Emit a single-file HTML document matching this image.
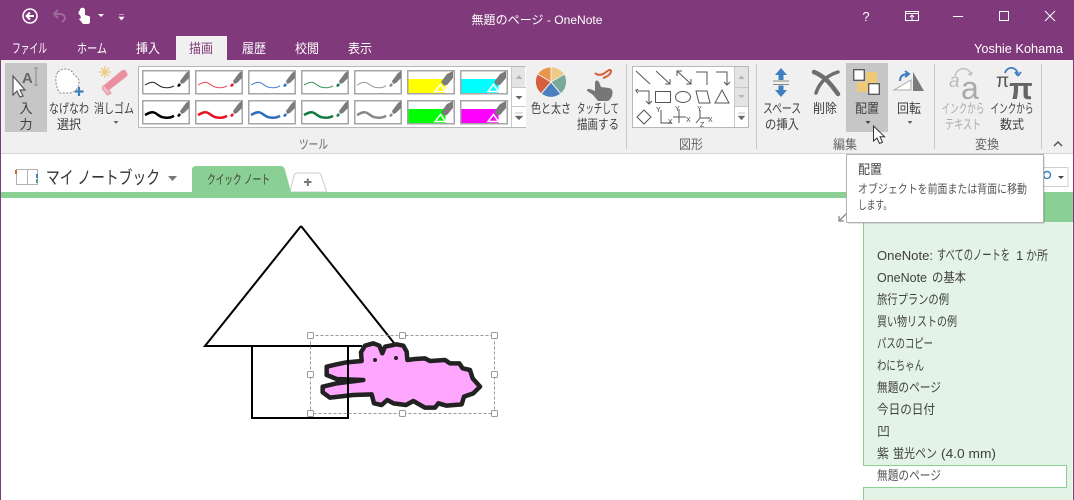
<!DOCTYPE html>
<html lang="ja"><head><meta charset="utf-8"><title>OneNote</title>
<style>
html,body{margin:0;padding:0;background:#fff;width:1074px;height:500px;overflow:hidden}
svg{display:block;position:absolute;left:0;top:0}
text{font-family:"Liberation Sans","Noto Sans CJK JP",sans-serif;font-size:13px;fill:#3f3f3f}
.w{fill:#fff}
.c{text-anchor:middle}
.g{fill:#666}
.d{fill:#aaa}
</style></head><body>
<svg width="1074" height="500" viewBox="0 0 1074 500" xmlns="http://www.w3.org/2000/svg">
<defs>
<g id="nib"><path d="M38 11l6-8 3-2v7l-5 5-3 1z" fill="#7b7b7b"/><path d="M35 16l2-3 2 2-2 2z" fill="currentColor"/></g>
<g id="cell"><rect x=".75" y=".75" width="46.5" height="23" fill="#fff" stroke="#a6a6a6" stroke-width="1.5"/></g>
<path id="wave" d="M3 15c3-1.500 6-3.500 9-2.500s5 4 9 4.800 8 .5 11-1.500" fill="none"/>
<g id="hl"><rect x=".75" y=".75" width="46.500" height="23" fill="#fff" stroke="#a6a6a6" stroke-width="1.500"/><rect x="1.500" y="9" width="37" height="14" fill="currentColor"/><path d="M28 21.500l5.500-7 5 7z" fill="currentColor" stroke="#fff" stroke-width="1.500"/><path d="M34 12l6-8 6-3v7l-6 7-3 .5z" fill="#7b7b7b"/></g>
</defs>

<!-- chrome -->
<rect width="1074" height="60" fill="#80397b"/>
<rect y="60" width="1074" height="93" fill="#f0f0f0"/>
<rect y="153" width="1074" height="1" fill="#d6d6d6"/>
<rect x="176" y="36" width="51" height="24" fill="#f0f0f0"/>
<rect x="0" y="60" width="1" height="440" fill="#80397b"/>
<rect x="1073" y="60" width="1" height="440" fill="#80397b"/>

<!-- quick access -->
<circle cx="30" cy="16" r="7" fill="none" stroke="#fff" stroke-width="1.500"/>
<path d="M34 16h-7M30 12.500L26.500 16l3.500 3.500" fill="none" stroke="#fff" stroke-width="2"/>
<path d="M58 10l-4 4 4 4M54 14h6c4 0 5 3 5 4s-1 3-3 4" fill="none" stroke="#9d6a9a" stroke-width="2"/>
<path d="M80 10c0-3 5-3 5 0v5l4 1c1 .5 1 1 1 2v4c0 1-1 2-2 2h-5l-4-5 2-1-1-3c-2-.5-2-3 0-5z" fill="#fff"/>
<path d="M98 14h6l-3 3z" fill="#fff"/>
<path d="M119 14.500h5M119 17h5l-2.500 3z" fill="#fff" stroke="#fff" stroke-width=".6"/>

<text class="w c" x="537" y="24" textLength="131" lengthAdjust="spacingAndGlyphs" style="font-size:12px">無題のページ - OneNote</text>

<!-- window controls -->
<text class="w c" x="866" y="21" style="font-size:13px">?</text>
<path d="M905.500 11.500h13v9h-13zM905.500 13.500h13M912 20v-5M910 17l2-2 2 2" fill="none" stroke="#fff"/>
<rect x="953" y="16" width="10" height="1" fill="#fff"/>
<rect x="999.500" y="11.500" width="9" height="9" fill="none" stroke="#fff"/>
<path d="M1045 11l10 10M1055 11l-10 10" stroke="#fff" fill="none"/>

<!-- tabs -->
<text class="w" x="12" y="53" textLength="35" lengthAdjust="spacingAndGlyphs">ファイル</text>
<text class="w" x="77" y="53" textLength="30" lengthAdjust="spacingAndGlyphs">ホーム</text>
<text class="w" x="136" y="53" textLength="24" lengthAdjust="spacingAndGlyphs">挿入</text>
<text x="189" y="53" textLength="24" lengthAdjust="spacingAndGlyphs" style="fill:#80397b">描画</text>
<text class="w" x="242" y="53" textLength="24" lengthAdjust="spacingAndGlyphs">履歴</text>
<text class="w" x="295" y="53" textLength="24" lengthAdjust="spacingAndGlyphs">校閲</text>
<text class="w" x="348" y="53" textLength="24" lengthAdjust="spacingAndGlyphs">表示</text>
<text class="w" x="974" y="53" textLength="89" lengthAdjust="spacingAndGlyphs">Yoshie Kohama</text>

<!-- input button -->
<rect x="5" y="63" width="42" height="69" fill="#c6c6c6"/>
<path d="M13 76v19l4-4 3 6 3-1-3-6h5z" fill="#fff" stroke="#555" stroke-width="1.200"/>
<text x="22" y="83" style="font-size:15px;font-weight:bold;fill:#666">A</text>
<path d="M34 68h4M36 68v17M34 85h4" stroke="#888" fill="none"/>
<text class="c" x="26" y="113">入</text>
<text class="c" x="26" y="129">力</text>

<!-- lasso -->
<path d="M58 72c5-5 13-3 15 1 1 3 6 4 6 9 0 6-4 11-10 11h-9c-4-5-6-16-2-21z" fill="#fff" stroke="#888" stroke-dasharray="2 1.500"/>
<path d="M79 87v9M75 91.500h8.500" stroke="#3f7fbf" stroke-width="2.200"/>
<text class="c" x="69" y="113" textLength="40" lengthAdjust="spacingAndGlyphs">なげなわ</text>
<text class="c" x="69" y="129" textLength="24" lengthAdjust="spacingAndGlyphs">選択</text>

<!-- eraser -->
<path d="M105 66v12M99 72h12M101 68l8 8M109 68l-8 8" stroke="#efc87f" stroke-width="1.300"/>
<path d="M103 86l18-15c2-1.500 4-1.500 5 0l1 2c1 1.500.5 3-1 4l-18 14z" fill="#e98fa0"/>
<path d="M103 86l-.5 3 5 6 3-1.500 .5-.5-6-7z" fill="#f1bcc6" stroke="#e98fa0"/>
<text class="c" x="114" y="113" textLength="40" lengthAdjust="spacingAndGlyphs">消しゴム</text>
<path d="M113.500 121h5l-2.500 3z" fill="#666"/>

<!-- pen gallery -->
<rect x="138.500" y="66.500" width="387" height="61" fill="#fff" stroke="#b8b8b8"/>
<g transform="translate(142,70)" color="#000"><use href="#cell"/><use href="#wave" stroke="#222"/><use href="#nib"/></g>
<g transform="translate(195,70)" color="#e81123"><use href="#cell"/><use href="#wave" stroke="#ef4b58"/><use href="#nib"/></g>
<g transform="translate(248,70)" color="#2e6dc0"><use href="#cell"/><use href="#wave" stroke="#4a82cc"/><use href="#nib"/></g>
<g transform="translate(301,70)" color="#107c41"><use href="#cell"/><use href="#wave" stroke="#3d9a5f"/><use href="#nib"/></g>
<g transform="translate(354,70)" color="#888"><use href="#cell"/><use href="#wave" stroke="#999"/><use href="#nib"/></g>
<g transform="translate(407,70)" color="#ff0"><use href="#hl"/></g>
<g transform="translate(460,70)" color="#0ff"><use href="#hl"/></g>
<g transform="translate(142,100)" color="#000"><use href="#cell"/><use href="#wave" stroke="#000" stroke-width="2.500"/><use href="#nib"/></g>
<g transform="translate(195,100)" color="#e81123"><use href="#cell"/><use href="#wave" stroke="#e81123" stroke-width="2.500"/><use href="#nib"/></g>
<g transform="translate(248,100)" color="#2e6dc0"><use href="#cell"/><use href="#wave" stroke="#2e6dc0" stroke-width="2.500"/><use href="#nib"/></g>
<g transform="translate(301,100)" color="#107c41"><use href="#cell"/><use href="#wave" stroke="#107c41" stroke-width="2.500"/><use href="#nib"/></g>
<g transform="translate(354,100)" color="#888"><use href="#cell"/><use href="#wave" stroke="#888" stroke-width="2.500"/><use href="#nib"/></g>
<g transform="translate(407,100)" color="#0f0"><use href="#hl"/></g>
<g transform="translate(460,100)" color="#f0f"><use href="#hl"/></g>
<!-- scroller -->
<rect x="512" y="67" width="14" height="60" fill="#fff"/>
<rect x="512" y="67" width="13" height="20" fill="#e4e4e4"/>
<path d="M515.500 79l3.500-4 3.500 4z" fill="#b5b5b5"/>
<path d="M512 87.500h14M512 106.500h14M511.500 67v60" stroke="#c8c8c8" fill="none"/>
<path d="M515.500 96h7l-3.500 3.500z" fill="#666"/>
<path d="M515 113h8M515 116h8l-4 4z" fill="#666" stroke="#888" stroke-width=".5"/>

<!-- color wheel -->
<g transform="translate(551,82)">
<path d="M0 0L-13 -8A15 15 0 0 1 0 -14.500z" fill="#e8964c"/>
<path d="M0 0L0 -14.500A15 15 0 0 1 13 -8z" fill="#efc986"/>
<path d="M0 0L13 -8A15 15 0 0 1 10 11z" fill="#7aa998"/>
<path d="M0 0L10 11A15 15 0 0 1 -10 11z" fill="#4a80bd"/>
<path d="M0 0L-10 11A15 15 0 0 1 -13 -8z" fill="#d4603f"/>
<path d="M0 0L0 -15M0 0L-13.500 -8M0 0L13.500 -8M0 0L10 12M0 0L-10 12" stroke="#f0f0f0"/>
</g>
<text class="c" x="551" y="113" textLength="40" lengthAdjust="spacingAndGlyphs">色と太さ</text>
<!-- touch draw -->
<path d="M595 73c3 3 8 2 11-1 3-2 4-3 5-1 0 3-4 6-8 7" fill="none" stroke="#d4603f" stroke-width="2"/>
<path d="M595 82c1-2 3-2 4 0l2 5 8 1c4 1 4 4 3 8-1 2-2 4-4 5h-10l-5-6c-2-2-7-4-6-5 1-2 3-1 8 1z" fill="#777"/>
<text class="c" x="598" y="113" textLength="42" lengthAdjust="spacingAndGlyphs">タッチして</text>
<text class="c" x="598" y="129" textLength="42" lengthAdjust="spacingAndGlyphs">描画する</text>

<rect x="626" y="64" width="1" height="85" fill="#c8c8c8"/>

<!-- shapes gallery -->
<rect x="632.500" y="66.500" width="116" height="61" fill="#fff" stroke="#b8b8b8"/>
<g fill="none" stroke="#555">
<path d="M636 71l14 13"/>
<path d="M656 71l14 13M670 79v5h-5"/>
<path d="M677 71l14 13M677 76v-5h5M691 79v5h-5"/>
<path d="M696 72h11v13"/>
<path d="M716 72h11v13M724 82l3 3 3-3"/>
<path d="M636 91v-1h2M638 91h11v13M636 91l2-2M636 91l2 2M646 101l3 3 3-3"/>
<rect x="655.500" y="91.500" width="15" height="11"/>
<ellipse cx="683" cy="97" rx="7.500" ry="5.500"/>
<path d="M696 91h11l3 12h-11z"/>
<path d="M722 90l7 13h-14z"/>
<path d="M644 110l7 7-7 7-7-7z"/>
<path d="M661 110v13h11"/>
<path d="M679 109v14M673 117h13"/>
<path d="M700 110v8h9M700 118l-4 5"/>
</g>
<g>
<text x="656" y="112" style="font-size:7px">Y</text><text x="668" y="124" style="font-size:7px">X</text>
<text x="675" y="111" style="font-size:7px">Y</text><text x="686" y="122" style="font-size:7px">X</text>
<text x="697" y="111" style="font-size:7px">Y</text><text x="708" y="122" style="font-size:7px">X</text><text x="700" y="127" style="font-size:7px">Z</text>
</g>
<rect x="735" y="67" width="13" height="20" fill="#e4e4e4"/>
<rect x="735" y="87" width="13" height="19" fill="#e4e4e4"/>
<path d="M738 79l3.500-3.500 3.500 3.500z" fill="#b5b5b5"/>
<path d="M738 95h7l-3.500 3z" fill="#b5b5b5"/>
<path d="M735 87.500h13M735 106.500h13M734.500 67v60" stroke="#c8c8c8" fill="none"/>
<path d="M738 113h7M738 116h7l-3.500 4z" fill="#666" stroke="#888" stroke-width=".5"/>

<rect x="756" y="64" width="1" height="85" fill="#c8c8c8"/>

<!-- space -->
<path d="M781 68l6 7h-3.500v5h-5v-5H775z" fill="#3f7fbf"/>
<path d="M773 81h16M773 84.500h16" stroke="#888" fill="none"/>
<path d="M781 97l6-7h-3.500v-4.500h-5V90H775z" fill="#3f7fbf"/>
<text class="c" x="782" y="113" textLength="38" lengthAdjust="spacingAndGlyphs">スペース</text>
<text class="c" x="782" y="129" textLength="34" lengthAdjust="spacingAndGlyphs">の挿入</text>
<!-- delete -->
<path d="M814 72c8 3 14 9 18 14l6 8" fill="none" stroke="#6e6e6e" stroke-width="4.500" stroke-linecap="round"/>
<path d="M838 72c-10 3-18 9-22 21" fill="none" stroke="#6e6e6e" stroke-width="3.500" stroke-linecap="round"/>
<text class="c" x="825" y="113" textLength="24" lengthAdjust="spacingAndGlyphs">削除</text>

<!-- arrange -->
<rect x="846" y="63" width="42" height="69" fill="#c6c6c6"/>
<rect x="866" y="72" width="11" height="11" fill="#efc878"/>
<rect x="857" y="82" width="11" height="10" fill="#efc878"/>
<rect x="853.700" y="69.700" width="10.600" height="10.600" fill="#fff" stroke="#555" stroke-width="1.300"/>
<rect x="868.700" y="83.700" width="10.600" height="10.600" fill="#fff" stroke="#555" stroke-width="1.300"/>
<text class="c" x="867" y="113" textLength="24" lengthAdjust="spacingAndGlyphs">配置</text>
<path d="M865.500 121h5l-2.500 3z" fill="#444"/>

<!-- rotate -->
<path d="M894 90l17-10v10z" fill="#fff" stroke="#aaa"/>
<path d="M913 72l11 19h-11z" fill="#7b7b7b"/>
<path d="M900 81c0-5 3-7 8-7M905 71l4 3-4 3" fill="none" stroke="#3f7fbf" stroke-width="2"/>
<text class="c" x="909" y="113" textLength="24" lengthAdjust="spacingAndGlyphs">回転</text>
<path d="M907.500 121h5l-2.500 3z" fill="#666"/>

<rect x="934" y="64" width="1" height="85" fill="#c8c8c8"/>

<!-- ink to text -->
<path d="M955 76c2-9 13-10 16-2M971 75l-3-1M971 75l1-3" fill="none" stroke="#bbb" stroke-width="1.300"/>
<text x="949" y="87" style="font-size:19px;font-style:italic;fill:#bbb">a</text>
<text x="961" y="99" style="font-size:32px;fill:#aaa">a</text>
<text class="c d" x="963" y="113" textLength="43" lengthAdjust="spacingAndGlyphs">インクから</text>
<text class="c d" x="963" y="129" textLength="36" lengthAdjust="spacingAndGlyphs">テキスト</text>
<!-- ink to math -->
<path d="M1005 73c2-7 11-7 13 1M1018 76l-3-4M1018 76l3-4" fill="none" stroke="#3f7fbf" stroke-width="1.800"/>
<text x="996" y="87" style="font-size:19px;fill:#555">π</text>
<text x="1009" y="99" style="font-size:31px;font-weight:bold;fill:#666">π</text>
<text class="c" x="1012" y="113" textLength="43" lengthAdjust="spacingAndGlyphs">インクから</text>
<text class="c" x="1012" y="129" textLength="24" lengthAdjust="spacingAndGlyphs">数式</text>

<rect x="1041" y="64" width="1" height="85" fill="#c8c8c8"/>
<path d="M1054 146l4-4 4 4" fill="none" stroke="#555" stroke-width="1.500"/>

<!-- group labels -->
<text class="g" x="299" y="149" textLength="29" lengthAdjust="spacingAndGlyphs">ツール</text>
<text class="g" x="679" y="149" textLength="24" lengthAdjust="spacingAndGlyphs">図形</text>
<text class="g" x="833" y="149" textLength="24" lengthAdjust="spacingAndGlyphs">編集</text>
<text class="g" x="975" y="149" textLength="24" lengthAdjust="spacingAndGlyphs">変換</text>

<!-- notebook row -->
<path d="M16.500 169.500h10l1 1 1-1h9v15h-21zM27.500 170v14" fill="#fff" stroke="#b0b0b0"/>
<rect x="15" y="170" width="2" height="4" fill="#d4603f"/>
<rect x="36" y="174" width="2" height="4" fill="#3f7fbf"/>
<rect x="36" y="179" width="2" height="4" fill="#5c9c84"/>
<text x="46" y="184" textLength="114" lengthAdjust="spacingAndGlyphs" style="font-size:18px;fill:#333">マイ ノートブック</text>
<path d="M168 176h9l-4.500 5z" fill="#777"/>

<path d="M290 192l4-16c.5-2 1.500-3 3-3h21c2 0 3 1 3.500 3l5 16z" fill="#fff" stroke="#ccc"/>
<path d="M304 182h7.500M307.800 178.500v7.500" stroke="#777" stroke-width="2" fill="none"/>
<path d="M192 192v-22c0-3 2-4 4-4h84c3 0 4 1 5 4l6 22z" fill="#8acf93"/>
<text x="207" y="184" textLength="63" lengthAdjust="spacingAndGlyphs" style="font-size:13px">クイック ノート</text>
<rect x="1" y="192" width="1072" height="6" fill="#8acf93"/>

<!-- search fragment -->
<rect x="1000" y="167.500" width="68" height="19" fill="#fff" stroke="#d0d0d0"/>
<circle cx="1047" cy="175" r="3.500" fill="none" stroke="#3f7fbf" stroke-width="1.500"/>
<path d="M1058 176h6l-3 3z" fill="#444"/>

<!-- page list -->
<rect x="863" y="198" width="210" height="24" fill="#8acf93"/>
<rect x="863.500" y="222" width="209" height="278" fill="#e3f3e5"/>
<rect x="863" y="222" width="1" height="278" fill="#8acf93"/>
<g>
<text x="877" y="260" textLength="56" lengthAdjust="spacingAndGlyphs">OneNote:</text>
<text x="937" y="260" textLength="73" lengthAdjust="spacingAndGlyphs" style="font-size:14px">すべてのノートを</text>
<text x="1016" y="260">1</text>
<text x="1026" y="260" textLength="22" lengthAdjust="spacingAndGlyphs">か所</text>
<text x="877" y="282" textLength="50" lengthAdjust="spacingAndGlyphs">OneNote</text>
<text x="932" y="282" textLength="34" lengthAdjust="spacingAndGlyphs">の基本</text>
<text x="877" y="304" textLength="72" lengthAdjust="spacingAndGlyphs">旅行プランの例</text>
<text x="877" y="326" textLength="80" lengthAdjust="spacingAndGlyphs">買い物リストの例</text>
<text x="877" y="348" textLength="56" lengthAdjust="spacingAndGlyphs">パスのコピー</text>
<text x="877" y="370" textLength="47" lengthAdjust="spacingAndGlyphs">わにちゃん</text>
<text x="877" y="392" textLength="64" lengthAdjust="spacingAndGlyphs">無題のページ</text>
<text x="877" y="414" textLength="58" lengthAdjust="spacingAndGlyphs">今日の日付</text>
<text x="877" y="436">凹</text>
<text x="877" y="458" textLength="12" lengthAdjust="spacingAndGlyphs">紫</text>
<text x="893" y="458" textLength="44" lengthAdjust="spacingAndGlyphs">蛍光ペン</text>
<text x="941" y="458" textLength="55" lengthAdjust="spacingAndGlyphs">(4.0 mm)</text>
</g>
<rect x="863.500" y="465.500" width="203" height="22" fill="#fff" stroke="#8acf93"/>
<rect x="863" y="466" width="1" height="21" fill="#fff"/>
<text x="877" y="480" textLength="64" lengthAdjust="spacingAndGlyphs" style="fill:#555">無題のページ</text>

<!-- canvas drawing -->
<path d="M301 226L205 346H362M301 226L394 343" fill="none" stroke="#000" stroke-width="2"/>
<g transform="translate(300,335) scale(.33333)">
<path d="M80 95L110 88 140 82 185 78 183 52 195 32 220 25 238 32 247 55 255 35 290 28 310 32 320 50 322 75 345 72 375 70 390 78 435 75 450 85 478 85 488 100 510 105 518 130 540 155 520 175 492 185 485 208 440 212 415 205 405 218 375 218 340 198 318 210 280 205 262 195 245 210 222 205 215 178 160 180 90 188 68 172 68 155 110 145 190 135 110 132 80 120Z" fill="#ffa6ff" stroke="#222" stroke-width="13.500" stroke-linejoin="round"/>
<circle cx="225" cy="75" r="6" fill="#222"/><circle cx="288" cy="69" r="6" fill="#222"/>
</g>
<path d="M252 347V418H348V346" fill="none" stroke="#000" stroke-width="2"/>
<rect x="310.500" y="335.500" width="184" height="78" fill="none" stroke="#999" stroke-dasharray="3 2"/>
<g fill="#fff" stroke="#999">
<rect x="307.500" y="332.500" width="6" height="6" rx="1"/><rect x="399.500" y="332.500" width="6" height="6" rx="1"/><rect x="491.500" y="332.500" width="6" height="6" rx="1"/>
<rect x="307.500" y="371.500" width="6" height="6" rx="1"/><rect x="491.500" y="371.500" width="6" height="6" rx="1"/>
<rect x="307.500" y="410.500" width="6" height="6" rx="1"/><rect x="399.500" y="410.500" width="6" height="6" rx="1"/><rect x="491.500" y="410.500" width="6" height="6" rx="1"/>
</g>

<!-- expand arrow -->
<path d="M839 221l8-8M839 216v5h5" fill="none" stroke="#888" stroke-width="1.300"/>

<!-- tooltip -->
<rect x="848" y="156" width="197" height="68" fill="#000" opacity=".1"/>
<rect x="846.500" y="154.500" width="197" height="68" fill="#fff" stroke="#b0b0b0"/>
<text x="858" y="174" textLength="24" lengthAdjust="spacingAndGlyphs" style="fill:#444">配置</text>
<text x="858" y="193" textLength="169" lengthAdjust="spacingAndGlyphs" style="fill:#555;font-size:12px">オブジェクトを前面または背面に移動</text>
<text x="858" y="209" textLength="34" lengthAdjust="spacingAndGlyphs" style="fill:#555;font-size:12px">します。</text>

<!-- cursor -->
<path d="M873.500 126v15l3.500-3 2.500 5.500 3-1.300-2.500-5.500h4.500z" fill="#fff" stroke="#333"/>
</svg>
</body></html>
